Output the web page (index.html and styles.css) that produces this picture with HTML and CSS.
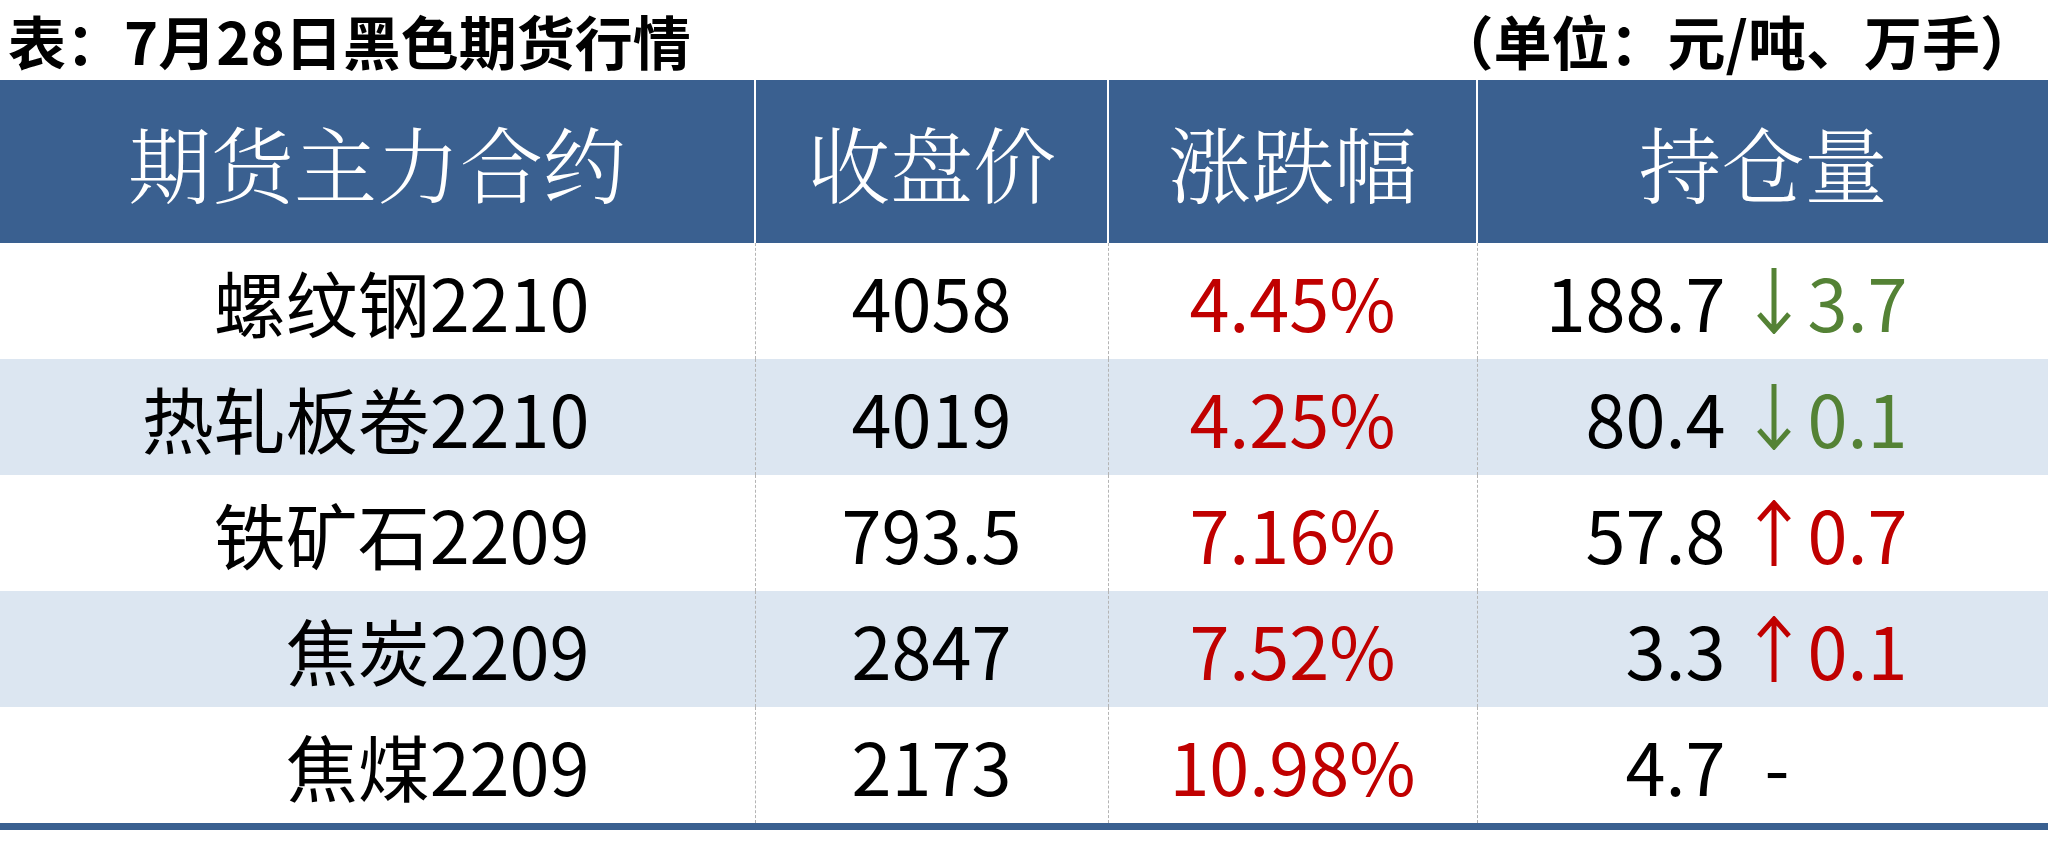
FILE: index.html
```html
<!DOCTYPE html>
<html lang="zh-CN">
<head>
<meta charset="utf-8">
<title>7月28日黑色期货行情</title>
<link rel="stylesheet" href="styles.css">
</head>
<body>
<div class="page">
  <div class="caption">
    <span class="caption-title">表：7月28日黑色期货行情</span>
    <span class="caption-unit">（单位：元/吨、万手）</span>
  </div>
  <table class="quotes">
    <colgroup>
      <col class="c1"><col class="c2"><col class="c3"><col class="c4">
    </colgroup>
    <thead>
      <tr>
        <th>期货主力合约</th>
        <th>收盘价</th>
        <th>涨跌幅</th>
        <th>持仓量</th>
      </tr>
    </thead>
    <tbody>
      <tr>
        <td class="name">螺纹钢2210</td>
        <td>4058</td>
        <td class="up">4.45%</td>
        <td class="oi"><span class="oi-num">188.7</span><span class="chg down"><svg class="arrow" viewBox="0 0 36 66" width="36" height="66"><path d="M18 0 V62 M3 46 L18 63 L33 46" fill="none" stroke="currentColor" stroke-width="5"/></svg>3.7</span></td>
      </tr>
      <tr class="alt">
        <td class="name">热轧板卷2210</td>
        <td>4019</td>
        <td class="up">4.25%</td>
        <td class="oi"><span class="oi-num">80.4</span><span class="chg down"><svg class="arrow" viewBox="0 0 36 66" width="36" height="66"><path d="M18 0 V62 M3 46 L18 63 L33 46" fill="none" stroke="currentColor" stroke-width="5"/></svg>0.1</span></td>
      </tr>
      <tr>
        <td class="name">铁矿石2209</td>
        <td>793.5</td>
        <td class="up">7.16%</td>
        <td class="oi"><span class="oi-num">57.8</span><span class="chg up"><svg class="arrow" viewBox="0 0 36 66" width="36" height="66"><path d="M18 66 V4 M3 20 L18 3 L33 20" fill="none" stroke="currentColor" stroke-width="5"/></svg>0.7</span></td>
      </tr>
      <tr class="alt">
        <td class="name">焦炭2209</td>
        <td>2847</td>
        <td class="up">7.52%</td>
        <td class="oi"><span class="oi-num">3.3</span><span class="chg up"><svg class="arrow" viewBox="0 0 36 66" width="36" height="66"><path d="M18 66 V4 M3 20 L18 3 L33 20" fill="none" stroke="currentColor" stroke-width="5"/></svg>0.1</span></td>
      </tr>
      <tr>
        <td class="name">焦煤2209</td>
        <td>2173</td>
        <td class="up">10.98%</td>
        <td class="oi"><span class="oi-num">4.7</span><span class="chg none">-</span></td>
      </tr>
    </tbody>
  </table>
</div>
</body>
</html>
```
FILE: styles.css
```css
html, body {
  margin: 0;
  padding: 0;
  background: #ffffff;
}
body {
  font-family: "Noto Sans CJK SC", "Noto Sans", sans-serif;
  color: #000000;
}
.page {
  width: 2048px;
}
.caption {
  display: flex;
  justify-content: space-between;
  align-items: center;
  height: 80px;
  padding: 0 10px 0 8px;
  font-weight: 700;
  font-size: 58px;
  line-height: 1;
}
.quotes {
  width: 2048px;
  border-collapse: collapse;
  table-layout: fixed;
  border-bottom: 7px solid #3a6090;
}
.c1 { width: 755px; }
.c2 { width: 353px; }
.c3 { width: 369px; }
.c4 { width: 571px; }
.quotes th {
  height: 163px;
  padding: 0;
  background: #3a6090;
  color: #ffffff;
  font-family: "Noto Serif CJK SC", "Noto Sans CJK SC", serif;
  font-weight: 300;
  font-size: 83px;
  line-height: 1;
  text-align: center;
  border-left: 2px solid #ffffff;
}
.quotes th:first-child {
  border-left: none;
}
.quotes td {
  height: 116px;
  padding: 0;
  font-size: 72px;
  line-height: 1;
  text-align: center;
  border-left: 1px dashed #b4b4b4;
}
.quotes td:first-child {
  border-left: none;
}
.quotes tr.alt td {
  background: #dce6f1;
}
.quotes td.name {
  text-align: right;
  padding-right: 165px;
}
.quotes td.up {
  color: #c00000;
}
.quotes td.oi {
  text-align: left;
}
.oi-num {
  display: inline-block;
  width: 248px;
  text-align: right;
}
.chg {
  display: inline-flex;
  align-items: center;
  margin-left: 30px;
  vertical-align: top;
}
.chg.down { color: #548235; }
.chg.up { color: #c00000; }
.chg.none { margin-left: 39px; color: #000000; }
.arrow {
  display: block;
  margin-right: 16px;
}
```
